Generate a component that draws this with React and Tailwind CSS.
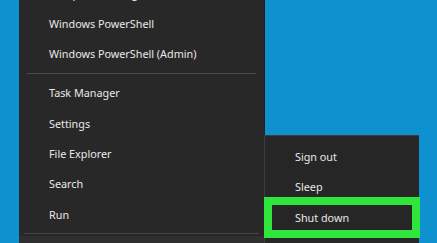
const mainItems = [
  ['Computer Management', 'Windows PowerShell', 'Windows PowerShell (Admin)'],
  ['Task Manager', 'Settings', 'File Explorer', 'Search', 'Run'],
];

const subItems = ['Sign out', 'Sleep', 'Shut down'];

const MenuItem = ({ label }) => (
  <div className="h-[30.4px] flex items-center pl-[30px] text-[10.8px] text-[#e8e8e8] whitespace-nowrap">
    {label}
  </div>
);

const Separator = () => (
  <div className="h-[8.5px] pt-[3.5px] px-[8px]">
    <div className="h-px bg-[#4a4a4a]" />
  </div>
);

export default function App() {
  return (
    <div
      className="relative w-[437px] h-[243px] overflow-hidden bg-[#0f90cf]"
      style={{ fontFamily: '"Noto Sans", "Open Sans", sans-serif' }}
    >
      <div className="pl-[19px]">
        <div className="w-[246px] mt-[-21.6px] bg-[#282828] border-r border-[#1f1f1f]">
          {mainItems[0].map((label) => (
            <MenuItem key={label} label={label} />
          ))}
          <Separator />
          {mainItems[1].map((label) => (
            <MenuItem key={label} label={label} />
          ))}
          <div className="h-[6px] pt-[2.5px] px-[5px]">
            <div className="h-px bg-[#454545]" />
          </div>
          <div className="h-[20px] bg-[#2f2f2f]" />
        </div>
      </div>

      {/* flyout submenu */}
      <div className="absolute left-[264px] top-[135px] w-[155px] h-[120px] bg-[#262626] border-l border-t border-[#3c3c3c] pt-[6px]">
        {subItems.map((label) => (
          <div
            key={label}
            className="h-[30.4px] flex items-center pl-[30px] text-[10.8px] text-[#e8e8e8] whitespace-nowrap"
          >
            {label}
          </div>
        ))}
      </div>

      {/* highlight box */}
      <div className="absolute left-[264px] top-[197px] w-[156px] h-[41px] border-[8px] border-[#30e53c]" />
    </div>
  );
}
